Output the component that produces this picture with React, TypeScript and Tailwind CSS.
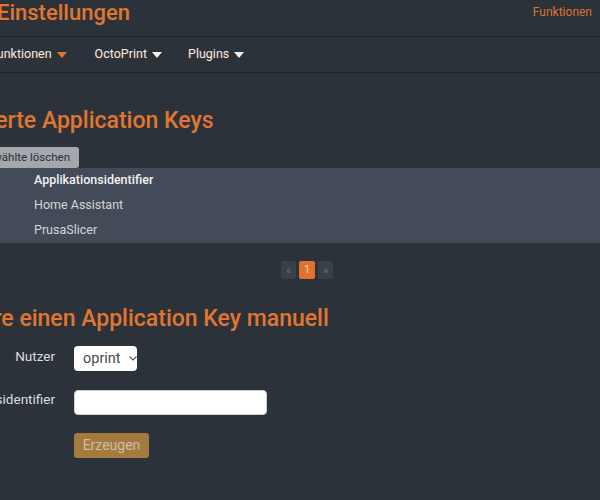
import React from "react";

const orange = "text-[#e0762f]";

function Caret({ color }: { color: string }) {
  return (
    <svg width="10" height="6" viewBox="0 0 10 6" className="ml-[5px]">
      <path d="M0 0 L10 0 L5 6 Z" fill={color} />
    </svg>
  );
}

export default function App() {
  return (
    <div
      className="w-[600px] h-[500px] overflow-hidden bg-[#2c323a] text-[#e4e4e4]"
      style={{ fontFamily: "Roboto, 'Noto Sans', sans-serif" }}
    >
      {/* header */}
      <div className="h-[37px] border-b border-[#1e2228] flex items-start justify-between">
        <div className={`-ml-[3px] -mt-[2px] text-[22px] leading-[30px] font-medium ${orange}`}>
          Einstellungen
        </div>
        <div className={`mt-[2px] mr-[8px] text-[12px] leading-[20px] text-[#d9742f]`}>Funktionen</div>
      </div>
      {/* nav */}
      <div className="h-[36px] border-b border-[#1e2228] flex items-center text-[12.5px] text-[#ececec] [text-shadow:0_1px_2px_rgba(120,60,20,0.7)]">
        <div className="flex items-center -ml-[10px]">
          <span>Funktionen</span>
          <Caret color="#e0762f" />
        </div>
        <div className="flex items-center ml-[28px]">
          <span>OctoPrint</span>
          <Caret color="#f0f0f0" />
        </div>
        <div className="flex items-center ml-[26px]">
          <span>Plugins</span>
          <Caret color="#f0f0f0" />
        </div>
      </div>
      {/* section 1 */}
      <div className={`mt-[34px] -ml-[84px] text-[23px] leading-[28px] font-medium ${orange}`}>
        Registrierte Application Keys
      </div>
      <div className="mt-[12px] w-[79px] flex justify-end">
        <button className="shrink-0 whitespace-nowrap h-[21px] px-[9px] rounded-[3px] bg-[#a4a8ac] text-[#2a2f36] text-[11.5px] leading-[21px]">
          Ausgewählte löschen
        </button>
      </div>
      <div className="bg-[#434a58] text-[12.5px]">
        <div className="h-[25px] pl-[34px] flex items-center font-medium text-[#f2f2f2]">Applikationsidentifier</div>
        <div className="h-[25px] pl-[34px] flex items-center text-[#d6d6d6]">Home Assistant</div>
        <div className="h-[25px] pl-[34px] flex items-center text-[#d6d6d6]">PrusaSlicer</div>
      </div>
      {/* pagination */}
      <div className="mt-[18px] flex justify-center gap-[3px] text-[10px] pl-[14px]">
        <div className="w-[15px] h-[18px] rounded-[2px] bg-[#3a404a] text-[#6b7280] flex items-center justify-center">«</div>
        <div className="w-[16px] h-[18px] rounded-[2px] bg-[#e0722d] text-[#f6d2b8] flex items-center justify-center text-[11px]">1</div>
        <div className="w-[15px] h-[18px] rounded-[2px] bg-[#3a404a] text-[#6b7280] flex items-center justify-center">»</div>
      </div>
      {/* section 2 */}
      <div className={`mt-[26px] -ml-[86px] text-[23px] leading-[28px] font-medium ${orange}`}>
        Generiere einen Application Key manuell
      </div>
      <div className="mt-[13px] grid grid-cols-[140px_1fr] gap-x-[19px] -ml-[85px] text-[13.5px]">
        <div className="h-[25px] flex items-center justify-end text-[#dcdcdc] -translate-y-[2px]">Nutzer</div>
        <div>
          <div className="w-[63px] h-[25px] rounded-[4px] bg-white text-[#4a4a4a] flex items-center pl-[9px] gap-[8px] text-[14.5px]">
            <span>oprint</span>
            <svg width="8" height="5" viewBox="0 0 8 5">
              <path d="M0.5 0.5 L4 4 L7.5 0.5" stroke="#555" strokeWidth="1.1" fill="none" />
            </svg>
          </div>
        </div>
        <div className="mt-[19px] h-[25px] flex items-center justify-end text-[#dcdcdc] -translate-y-[3px]">Applikationsidentifier</div>
        <div className="mt-[19px]">
          <div className="w-[193px] h-[25px] rounded-[4px] bg-white border border-[#cfcfcf]" />
        </div>
        <div />
        <div className="mt-[18px]">
          <div className="w-[75px] h-[25px] rounded-[3px] bg-[#a57a3f] text-[#cbbfa8] flex items-center justify-center text-[14px]">Erzeugen</div>
        </div>
      </div>
    </div>
  );
}
